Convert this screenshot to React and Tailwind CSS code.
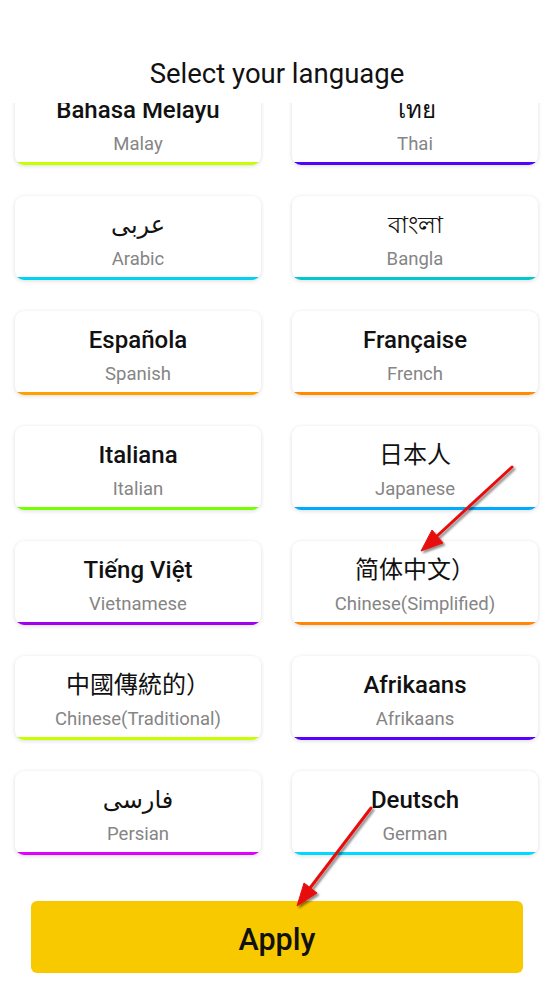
import React from 'react';

const font = 'Roboto, "Noto Sans", "DejaVu Sans", "Noto Sans CJK SC", sans-serif';

const languages = [
  { native: 'Bahasa Melayu', name: 'Malay', bar: 'bg-[#c6ff00]', bold: true },
  { native: 'ไทย', name: 'Thai', bar: 'bg-[#5200ff]' },
  { native: 'عربى', name: 'Arabic', bar: 'bg-[#00d2f2]' },
  { native: 'বাংলা', name: 'Bangla', bar: 'bg-[#00c8cc]' },
  { native: 'Española', name: 'Spanish', bar: 'bg-[#ffa200]', bold: true },
  { native: 'Française', name: 'French', bar: 'bg-[#ff8c00]', bold: true },
  { native: 'Italiana', name: 'Italian', bar: 'bg-[#76ff00]', bold: true },
  { native: '日本人', name: 'Japanese', bar: 'bg-[#00aaff]' },
  { native: 'Tiếng Việt', name: 'Vietnamese', bar: 'bg-[#a000f2]', bold: true },
  { native: '简体中文）', name: 'Chinese(Simplified)', bar: 'bg-[#ff8800]' },
  { native: '中國傳統的）', name: 'Chinese(Traditional)', bar: 'bg-[#c8ff00]' },
  { native: 'Afrikaans', name: 'Afrikaans', bar: 'bg-[#5a00ff]', bold: true },
  { native: 'فارسی', name: 'Persian', bar: 'bg-[#e000ff]' },
  { native: 'Deutsch', name: 'German', bar: 'bg-[#00d8ff]', bold: true },
];

const LanguageCard = ({ lang }) => (
  <div className="h-[84px] flex flex-col items-center bg-white rounded-[9px] overflow-hidden shadow-[0_1px_4px_rgba(0,0,0,0.14)]">
    <div
      className={`mt-[14px] h-[30px] leading-[30px] text-[24px] text-[#111] whitespace-nowrap ${lang.bold ? 'font-medium' : 'font-normal'}`}
    >
      {lang.native}
    </div>
    <div className="mt-[8px] h-[22px] leading-[22px] text-[18.5px] text-[#858585] whitespace-nowrap">
      {lang.name}
    </div>
    <div className={`mt-auto w-full h-[3px] ${lang.bar}`}></div>
  </div>
);

const Arrows = () => (
  <svg className="absolute inset-0 pointer-events-none" width="554" height="984" viewBox="0 0 554 984">
    <defs>
      <filter id="arrowShadow" x="-20%" y="-20%" width="140%" height="140%">
        <feDropShadow dx="2" dy="2" stdDeviation="1.2" floodColor="#000" floodOpacity="0.45" />
      </filter>
    </defs>
    <g filter="url(#arrowShadow)" fill="#e81010" stroke="#e81010">
      <line x1="512" y1="467" x2="437" y2="536" strokeWidth="3" strokeLinecap="round" />
      <polygon points="421,551 443,543 432,530" strokeWidth="1" strokeLinejoin="round" />
      <line x1="371" y1="808" x2="310" y2="888" strokeWidth="3" strokeLinecap="round" />
      <polygon points="297,906 317,893 304,883" strokeWidth="1" strokeLinejoin="round" />
    </g>
  </svg>
);

const App = () => {
  return (
    <div className="relative w-[554px] h-[984px] bg-white flex flex-col overflow-hidden" style={{ fontFamily: font }}>
      <div className="absolute top-[103px] left-0 right-0 h-[798px] overflow-hidden">
        <div className="-mt-[22px] grid grid-cols-2 gap-x-[31px] gap-y-[31px] pl-[15px] pr-[16px]">
          {languages.map((lang) => (
            <LanguageCard key={lang.name} lang={lang} />
          ))}
        </div>
      </div>

      <div className="relative z-10 h-[103px] bg-white flex justify-center">
        <h1 className="mt-[57px] h-[34px] leading-[34px] text-[27.5px] font-normal text-[#111]">
          Select your language
        </h1>
      </div>

      <div className="mt-auto px-[31px] pb-[11px]">
        <button className="w-full h-[72px] pt-[5px] rounded-[6px] bg-[#f9c900] text-[30.5px] font-medium text-[#111]">
          Apply
        </button>
      </div>

      <Arrows />
    </div>
  );
};

export default App;
